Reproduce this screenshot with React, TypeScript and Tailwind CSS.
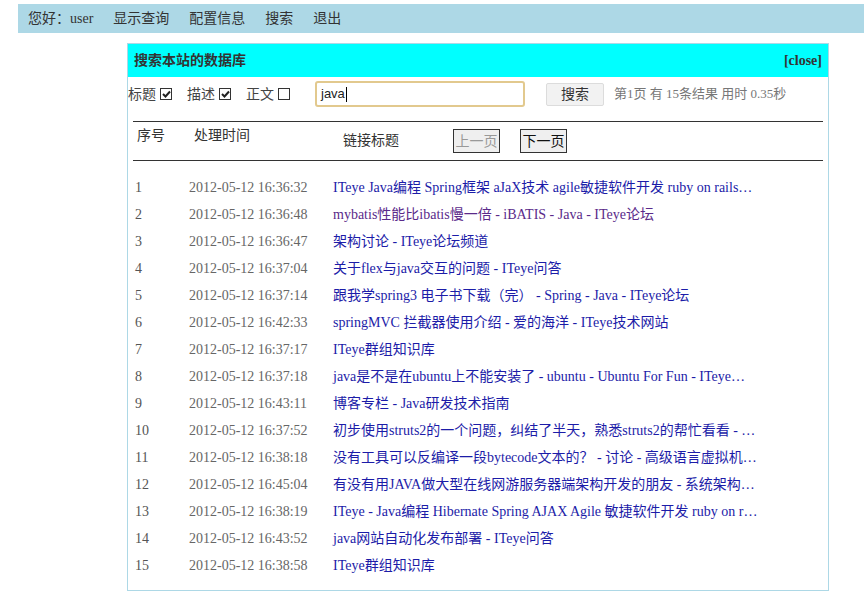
import React from "react";

const rows: { t: string; v?: boolean }[] = [
  { t: "ITeye Java编程 Spring框架 aJaX技术 agile敏捷软件开发 ruby on rails…" },
  { t: "mybatis性能比ibatis慢一倍 - iBATIS - Java - ITeye论坛", v: true },
  { t: "架构讨论 - ITeye论坛频道" },
  { t: "关于flex与java交互的问题 - ITeye问答" },
  { t: "跟我学spring3 电子书下载（完） - Spring - Java - ITeye论坛" },
  { t: "springMVC 拦截器使用介绍 - 爱的海洋 - ITeye技术网站" },
  { t: "ITeye群组知识库" },
  { t: "java是不是在ubuntu上不能安装了 - ubuntu - Ubuntu For Fun - ITeye…" },
  { t: "博客专栏 - Java研发技术指南" },
  { t: "初步使用struts2的一个问题，纠结了半天，熟悉struts2的帮忙看看 - …" },
  { t: "没有工具可以反编译一段bytecode文本的？ - 讨论 - 高级语言虚拟机…" },
  { t: "有没有用JAVA做大型在线网游服务器端架构开发的朋友 - 系统架构…" },
  { t: "ITeye - Java编程 Hibernate Spring AJAX Agile 敏捷软件开发 ruby on r…" },
  { t: "java网站自动化发布部署 - ITeye问答" },
  { t: "ITeye群组知识库" },
];

const times = [
  "2012-05-12 16:36:32",
  "2012-05-12 16:36:48",
  "2012-05-12 16:36:47",
  "2012-05-12 16:37:04",
  "2012-05-12 16:37:14",
  "2012-05-12 16:42:33",
  "2012-05-12 16:37:17",
  "2012-05-12 16:37:18",
  "2012-05-12 16:43:11",
  "2012-05-12 16:37:52",
  "2012-05-12 16:38:18",
  "2012-05-12 16:45:04",
  "2012-05-12 16:38:19",
  "2012-05-12 16:43:52",
  "2012-05-12 16:38:58",
];

const Box = ({ checked }: { checked: boolean }) => (
  <span className="inline-flex w-[12px] h-[12px] border border-[#333] bg-white items-center justify-center ml-[4px]">
    {checked && (
      <svg width="9" height="9" viewBox="0 0 9 9">
        <path d="M1 4 L3.5 6.5 L8 1.5" stroke="#222" strokeWidth="2" fill="none" />
      </svg>
    )}
  </span>
);

export default function App() {
  const serif = { fontFamily: '"Liberation Serif", "Noto Sans CJK SC", serif' };
  return (
    <div className="bg-white w-[864px] h-[597px] overflow-hidden text-[14px] text-[#333]" style={serif}>
      <div className="ml-[18px] mt-[4px] h-[29px] bg-[#add8e6] flex items-center pl-[10px] gap-[20px]">
        <span>您好：user</span>
        <span>显示查询</span>
        <span>配置信息</span>
        <span>搜索</span>
        <span>退出</span>
      </div>
      <div className="ml-[127px] mt-[10px] w-[702px] h-[548px] border border-[#add8e6] flex flex-col">
        <div className="h-[33px] bg-[#00ffff] flex items-center justify-between pl-[6px] pr-[6px] font-bold text-[#333]">
          <span className="text-[14px]">搜索本站的数据库</span>
          <span className="text-[14px]" style={{ fontFamily: '"Liberation Serif", serif' }}>[close]</span>
        </div>
        <div className="h-[34px] flex items-center text-[#444]">
          <span className="flex items-center">标题<Box checked /></span>
          <span className="flex items-center ml-[15px]">描述<Box checked /></span>
          <span className="flex items-center ml-[15px]">正文<Box checked={false} /></span>
          <div className="ml-[25px] w-[210px] h-[26px] border-2 border-[#e2c98e] rounded-[3px] flex items-center pl-[4px] text-[13px] text-[#222]" style={{ fontFamily: '"Liberation Sans", sans-serif' }}>
            java<span className="inline-block w-px h-[15px] bg-black ml-px" />
          </div>
          <button className="ml-[21px] w-[58px] h-[23px] bg-[#f2f2f2] border border-[#dcdcdc] rounded-[2px] text-[14px] text-[#333]">搜索</button>
          <span className="ml-[10px] text-[13px] text-[#777]">第1页 有 15条结果 用时 0.35秒</span>
        </div>
        <div className="mx-[5px] mt-[10px] border-t border-[#333]" />
        <div className="h-[38px] flex">
          <span className="ml-[9px] mt-[3px] w-[57px]">序号</span>
          <span className="mt-[3px] w-[149px]">处理时间</span>
          <span className="mt-[8px] w-[110px]">链接标题</span>
          <button className="mt-[7px] w-[47px] h-[24px] border border-[#333] bg-[#efefef] text-[#999] text-[14px]">上一页</button>
          <button className="ml-[20px] mt-[7px] w-[47px] h-[24px] border border-[#333] bg-[#efefef] text-[#111] text-[14px]">下一页</button>
        </div>
        <div className="mx-[5px] border-t border-[#333]" />
        <div className="pt-[13px] flex flex-col">
          {rows.map((r, i) => (
            <div key={i} className="h-[27px] flex items-center">
              <span className="pl-[7px] w-[61px] text-[#555]">{i + 1}</span>
              <span className="w-[144px] text-[#666]">{times[i]}</span>
              <span className={`whitespace-nowrap ${r.v ? "text-[#5a2a8a]" : "text-[#1c1ca8]"}`}>{r.t}</span>
            </div>
          ))}
        </div>
      </div>
    </div>
  );
}
